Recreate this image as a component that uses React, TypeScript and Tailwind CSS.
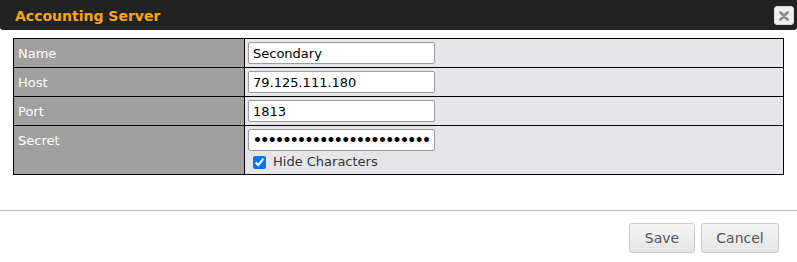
import React from 'react';

const rows = [
  { label: 'Name', value: 'Secondary' },
  { label: 'Host', value: '79.125.111.180' },
  { label: 'Port', value: '1813' },
];

export default function App() {
  return (
    <div className="w-[797px] h-[262px] bg-white font-['DejaVu_Sans',Verdana,sans-serif] text-[13px]">
      {/* title bar */}
      <div className="h-[30px] bg-[#222222] rounded-b-[3px] flex items-center justify-between pl-[15px] pr-[3px]">
        <span className="text-[14px] font-bold text-[#f9a51b] leading-none pt-[2px]">Accounting Server</span>
        <button className="w-[20px] h-[19px] mt-[1px] rounded-[3px] bg-[#eeeeee] border border-[#dddddd] flex items-center justify-center">
          <svg width="10" height="10" viewBox="0 0 10 10">
            <path d="M1.5 1.5 L8.5 8.5 M8.5 1.5 L1.5 8.5" stroke="#888888" strokeWidth="2.6" strokeLinecap="round" />
          </svg>
        </button>
      </div>

      {/* settings table */}
      <div className="pt-[8px] px-[13px]">
        <div className="border border-black grid grid-cols-[231px_1fr] w-[771px]">
          {rows.map((r) => (
            <React.Fragment key={r.label}>
              <div className="bg-[#a0a0a0] text-white h-[29px] pl-[4px] pt-[7px] border-b border-r border-black leading-[16px]">{r.label}</div>
              <div className="bg-[#e6e6ea] h-[29px] border-b border-black pl-[3px] pt-[3px]">
                <input
                  readOnly
                  value={r.value}
                  className="w-[187px] h-[22px] bg-white border border-[#9a9a9a] rounded-[2px] px-[4px] text-[13px] text-black outline-none"
                />
              </div>
            </React.Fragment>
          ))}
          <div className="bg-[#a0a0a0] text-white pl-[4px] pt-[7px] border-r border-black leading-[16px]">Secret</div>
          <div className="bg-[#e6e6ea] pl-[3px] pt-[3px] pb-[4px]">
            <input
              readOnly
              type="password"
              value="abcdefghijklmnopqrstuvwxyz0123456789"
              className="w-[187px] h-[22px] bg-white border border-[#9a9a9a] rounded-[2px] px-[4px] text-[14px] font-bold tracking-[-1.6px] text-black outline-none"
            />
            <label className="flex items-center gap-[7px] pl-[5px] mt-[3px] h-[16px] text-[#333333]">
              <input type="checkbox" defaultChecked className="w-[13px] h-[13px] m-0 accent-[#0075ff]" />
              <span>Hide Characters</span>
            </label>
          </div>
        </div>
      </div>

      {/* footer */}
      <div className="mt-[35px] border-t border-[#b8b8b8] flex justify-end gap-[6px] pr-[18px] pt-[12px]">
        <button className="w-[66px] h-[30px] rounded-[3px] border border-[#cccccc] bg-gradient-to-b from-[#f6f6f6] to-[#e4e4e4] text-[#555555] text-[14px]">Save</button>
        <button className="w-[78px] h-[30px] rounded-[3px] border border-[#cccccc] bg-gradient-to-b from-[#f6f6f6] to-[#e4e4e4] text-[#555555] text-[14px]">Cancel</button>
      </div>
    </div>
  );
}
